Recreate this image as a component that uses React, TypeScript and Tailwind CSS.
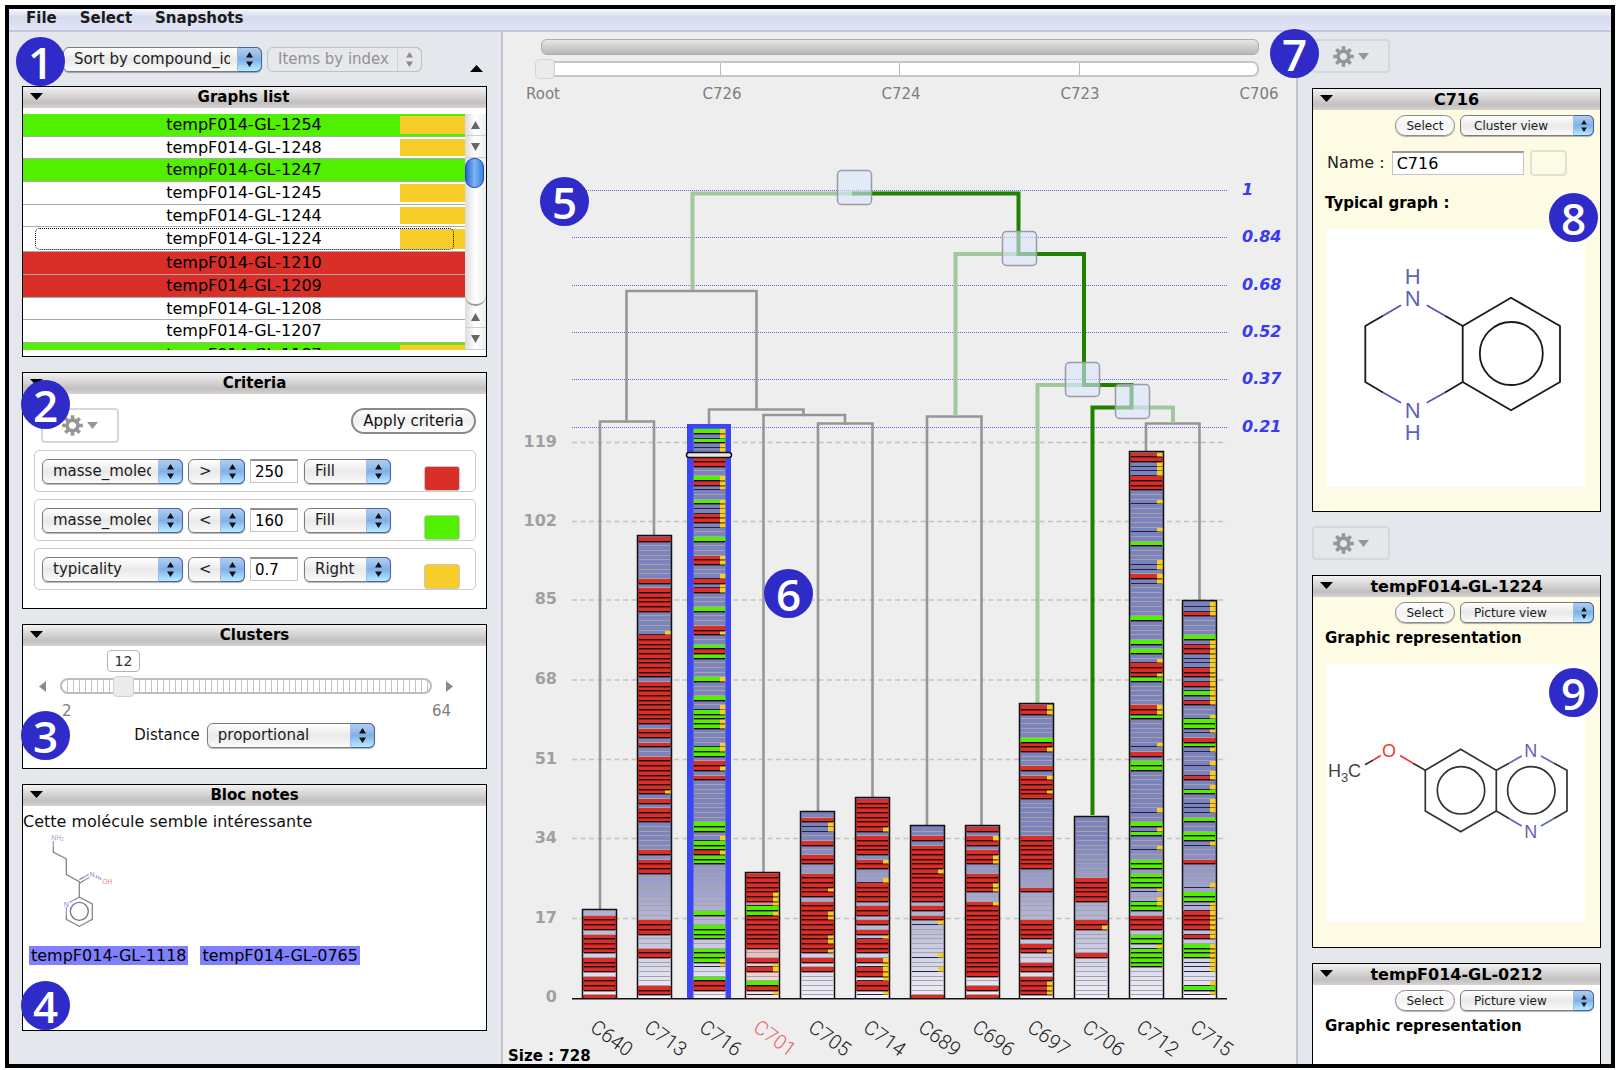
import React from "react";

const SANS = "font-['DejaVu_Sans','Noto_Sans',sans-serif]";

/* ---------- small shared controls ---------- */

function Badge({ n, className }: { n: number; className: string }) {
  return (
    <span
      className={`absolute z-20 flex size-[49px] items-center justify-center rounded-full bg-[#2f2bc9] font-['Open_Sans',sans-serif] text-[44px] leading-none font-semibold text-white ${className}`}
    >
      {n}
    </span>
  );
}

function Triangle({ up = false }: { up?: boolean }) {
  return (
    <svg className="block h-[7px] w-[13px]" viewBox="0 0 13 7" aria-hidden="true">
      <path d={up ? "M0 7L6.5 0L13 7Z" : "M0 0H13L6.5 7Z"} fill="#000" />
    </svg>
  );
}

function Popup({
  label,
  options,
  className,
  small = false,
  disabled = false,
}: {
  label: string;
  options: string[];
  className: string;
  small?: boolean;
  disabled?: boolean;
}) {
  return (
    <span className={`relative block shrink-0 ${small ? "h-[21px]" : "h-[25px]"} ${className}`}>
      <select
        aria-label={label}
        disabled={disabled}
        className={`block size-full appearance-none rounded-[6px] border pr-[31px] ${
          small ? "pl-[13px] text-[12px]" : "pl-[10px] text-[15px]"
        } ${
          disabled
            ? "border-[#bfc1c5] bg-[#e6e8ec] text-[#929292]"
            : "border-[#7c7c7c] bg-linear-to-b from-white via-[#e9e9e9] to-[#fafafa] text-[#1c1c1c] shadow-[0_1px_1px_rgba(0,0,0,0.3)]"
        }`}
      >
        {options.map((o) => (
          <option key={o}>{o}</option>
        ))}
      </select>
      <span
        className={`pointer-events-none absolute inset-y-0 right-0 flex items-center justify-center rounded-r-[6px] border ${
          small ? "w-[21px]" : "w-[25px]"
        } ${
          disabled
            ? "border-[#bfc1c5] border-l-[#cfd1d5]"
            : "border-[#4a62a8] border-l-[#9dbce4] bg-linear-to-b from-[#b4cdee] via-[#7fb0e6] to-[#b8ecff]"
        }`}
      >
        <svg className={small ? "h-[12px] w-[6px]" : "h-[15px] w-[7px]"} viewBox="0 0 7 15" aria-hidden="true">
          <path d="M3.5 0L7 5.5H0ZM0 9.5H7L3.5 15Z" fill={disabled ? "#8a8a8a" : "#111"} />
        </svg>
      </span>
    </span>
  );
}

function GearButton({ label, className = "" }: { label: string; className?: string }) {
  return (
    <button
      type="button"
      aria-label={label}
      className={`flex w-[78px] shrink-0 items-center rounded-[4px] border-2 border-[#d6d7d9] pl-[19px] ${className}`}
    >
      <svg className="size-[21px]" viewBox="-10.5 -10.5 21 21" aria-hidden="true">
        <g stroke="#969696" strokeWidth="3.6">
          <path d="M0 -10.3V-5M0 5V10.3M-10.3 0H-5M5 0H10.3M-7.2 -7.2L-4 -4M4 4L7.2 7.2M-7.2 7.2L-4 4M4 -4L7.2 -7.2" />
          <circle r="5.4" fill="none" />
        </g>
      </svg>
      <svg className="ml-[4px] h-[7px] w-[11px]" viewBox="0 0 11 7" aria-hidden="true">
        <path d="M0 0H11L5.5 7Z" fill="#969696" />
      </svg>
    </button>
  );
}

function PanelHeader({
  title,
  large = false,
  className = "",
}: {
  title: string;
  large?: boolean;
  className?: string;
}) {
  return (
    <header
      className={`relative flex h-[21px] shrink-0 items-center justify-center bg-linear-to-b from-[#f2f2f2] via-[#c3bfbf] via-75% to-[#d6d3d3] ${className}`}
    >
      <button type="button" aria-label={`Collapse ${title}`} className="absolute top-[6px] left-[7px]">
        <Triangle />
      </button>
      <h2 className={`leading-none font-bold text-black ${large ? "text-[16px]" : "text-[15px]"}`}>{title}</h2>
    </header>
  );
}

/* ---------- left column ---------- */

type Row = { name: string; fill: string; mark: boolean; focused?: boolean };

const rows: Row[] = [
  { name: "tempF014-GL-1254", fill: "bg-[#50f000]", mark: true },
  { name: "tempF014-GL-1248", fill: "bg-white", mark: true },
  { name: "tempF014-GL-1247", fill: "bg-[#50f000]", mark: false },
  { name: "tempF014-GL-1245", fill: "bg-white", mark: true },
  { name: "tempF014-GL-1244", fill: "bg-white", mark: true },
  { name: "tempF014-GL-1224", fill: "bg-white", mark: true, focused: true },
  { name: "tempF014-GL-1210", fill: "bg-[#da2e29]", mark: false },
  { name: "tempF014-GL-1209", fill: "bg-[#da2e29]", mark: false },
  { name: "tempF014-GL-1208", fill: "bg-white", mark: false },
  { name: "tempF014-GL-1207", fill: "bg-white", mark: false },
];

function ScrollArrow({ down = false }: { down?: boolean }) {
  return (
    <button
      type="button"
      aria-label={down ? "Scroll down" : "Scroll up"}
      className="flex h-[22px] w-full shrink-0 items-center justify-center border-b border-[#cfcfcf]"
    >
      <svg className="h-[8px] w-[9px]" viewBox="0 0 9 8" aria-hidden="true">
        <path d={down ? "M0 0H9L4.5 8Z" : "M0 8L4.5 0L9 8Z"} fill="#666" />
      </svg>
    </button>
  );
}

function GraphsPanel() {
  return (
    <section className="flex h-[271px] shrink-0 flex-col border border-black bg-white">
      <PanelHeader title="Graphs list" className="pr-[22px]" />
      <div className="mt-[6px] flex h-[236px] overflow-hidden">
        <ul className="min-w-0 flex-1">
          <li className="flex h-[229px] flex-col">
            {rows.map((r) => (
              <button
                key={r.name}
                type="button"
                className={`relative flex w-full items-center justify-center border-b border-[#aaa] text-[16px] leading-none text-black ${
                  r.focused ? "h-[25px] shrink-0" : "min-h-0 flex-1"
                } ${r.fill}`}
              >
                {r.mark && <span className="absolute top-[2px] right-0 bottom-[2px] w-[65px] bg-[#f6cd29]" />}
                {r.focused && (
                  <span className="absolute inset-y-[1px] right-[11px] left-[12px] rounded-[5px] border border-dotted border-black" />
                )}
                <span className="relative">{r.name}</span>
              </button>
            ))}
          </li>
          <li className="relative flex h-[23px] items-center justify-center bg-[#50f000] text-[16px] leading-none">
            <span className="absolute top-[2px] right-0 bottom-[2px] w-[65px] bg-[#f6cd29]" />
            <span className="relative">tempF014-GL-1187</span>
          </li>
        </ul>
        <div className="flex w-[21px] flex-col bg-linear-to-r from-[#dcdcdc] via-white to-[#ececec]">
          <ScrollArrow />
          <ScrollArrow down />
          <span className="h-[30px] w-[19px] shrink-0 rounded-[9px] border border-[#1b4fae] bg-linear-to-r from-[#2a66cc] via-[#7db4f5] to-[#3c7fdc]" />
          <span className="flex-1 rounded-b-[10px] border-b-2 border-[#999]" />
          <ScrollArrow />
          <ScrollArrow down />
        </div>
      </div>
    </section>
  );
}

const criteria = [
  { field: "masse_moleculaire", op: ">", value: "250", mode: "Fill", color: "bg-[#da2e29]" },
  { field: "masse_moleculaire", op: "<", value: "160", mode: "Fill", color: "bg-[#50f000]" },
  { field: "typicality", op: "<", value: "0.7", mode: "Right", color: "bg-[#f6cd29]" },
];

function CriteriaPanel() {
  return (
    <section className="relative h-[237px] shrink-0 border border-black bg-white">
      <PanelHeader title="Criteria" />
      <Badge n={2} className="top-[7px] -left-[2px]" />
      <div className="mt-[14px] flex items-start justify-between pr-[10px] pl-[18px]">
        <GearButton label="Criteria actions" className="h-[35px]" />
        <button
          type="button"
          className="h-[26px] w-[125px] rounded-full border-2 border-[#8a8a8a] bg-linear-to-b from-white via-[#f0f0f0] to-white text-[15px] leading-none text-[#111]"
        >
          Apply criteria
        </button>
      </div>
      <div className="mt-[7px] flex flex-col gap-[7px] pr-[10px] pl-[11px]">
        {criteria.map((c, i) => (
          <div key={i} className="flex h-[42px] items-center rounded-[5px] border border-[#ccc] pr-[15px] pl-[7px]">
            <Popup label={`Criterion ${i + 1} field`} options={[c.field]} className="w-[141px]" />
            <Popup label={`Criterion ${i + 1} operator`} options={[c.op]} className="ml-[5px] w-[57px]" />
            <input
              aria-label={`Criterion ${i + 1} value`}
              defaultValue={c.value}
              className="ml-[5px] h-[24px] w-[48px] border border-t-2 border-[#c4c4c4] border-t-[#8f8f8f] px-[4px] text-[15px] text-black"
            />
            <Popup label={`Criterion ${i + 1} mode`} options={[c.mode]} className="ml-[6px] w-[87px]" />
            <button
              type="button"
              aria-label={`Criterion ${i + 1} colour`}
              className={`mt-auto ml-auto h-[25px] w-[36px] rounded-[3px] border border-[#c8c8c8] ${c.color}`}
            />
          </div>
        ))}
      </div>
    </section>
  );
}

function ClustersPanel() {
  return (
    <section className="relative flex h-[145px] shrink-0 flex-col border border-black bg-white">
      <PanelHeader title="Clusters" />
      <Badge n={3} className="top-[86px] -left-[2px]" />
      <output
        htmlFor="clusters"
        className="mt-[4px] ml-[84px] flex h-[22px] w-[33px] items-center justify-center rounded-[4px] border border-[#b4b4b4] text-[14px] leading-none text-[#333]"
      >
        12
      </output>
      <div className="mt-[6px] flex items-center pr-[33px] pl-[16px]">
        <svg className="h-[11px] w-[7px]" viewBox="0 0 7 11" aria-hidden="true">
          <path d="M7 0V11L0 5.5Z" fill="#8a8a8a" />
        </svg>
        <input
          id="clusters"
          aria-label="Number of clusters"
          type="range"
          min={2}
          max={64}
          defaultValue={12}
          className="mx-[14px] h-[16px] min-w-0 flex-1 appearance-none rounded-full border-2 border-[#bdbdbd] bg-[repeating-linear-gradient(90deg,#fff_0px,#fff_5px,#c4c4c4_5px,#c4c4c4_6px)] [&::-webkit-slider-thumb]:-ml-[5px] [&::-webkit-slider-thumb]:h-[21px] [&::-webkit-slider-thumb]:w-[21px] [&::-webkit-slider-thumb]:appearance-none [&::-webkit-slider-thumb]:rounded-[4px] [&::-webkit-slider-thumb]:border [&::-webkit-slider-thumb]:border-[#d0d0d0] [&::-webkit-slider-thumb]:bg-[#ebebeb]"
        />
        <svg className="h-[11px] w-[7px]" viewBox="0 0 7 11" aria-hidden="true">
          <path d="M0 0V11L7 5.5Z" fill="#8a8a8a" />
        </svg>
      </div>
      <div className="mt-[7px] flex justify-between pr-[35px] pl-[39px] text-[15px] leading-[20px] text-[#7d7d7d]">
        <span>2</span>
        <span>64</span>
      </div>
      <label className="mt-[2px] flex items-center justify-center gap-[7px] text-[15px] text-[#111]">
        Distance
        <Popup label="Distance" options={["proportional"]} className="w-[168px]" />
      </label>
    </section>
  );
}

function NoteMolecule() {
  return (
    <svg className="ml-[27px] h-[95px] w-[64px]" viewBox="150 190 192 285" role="img" aria-label="Molecule">
      <g fill="none" stroke="#8a8a8a" strokeWidth="4">
        <path d="M160 232V247L199 268V315L238 336V382L277 403V449L238 470L199 449V432" />
        <path d="M238 382L222 391M238 330L252 322M240 340L254 331" />
        <circle cx="238" cy="425" r="27" stroke="#777788" />
      </g>
      <g fill="none" stroke="#9c9cd6" strokeWidth="4">
        <path d="M160 214V232M222 391L208 398M199 412V432M252 322L266 314M254 331L268 323" />
        <path d="M288 320L306 330" strokeWidth="8" strokeDasharray="4 3" />
      </g>
      <g fontFamily="'Liberation Sans', sans-serif" fontSize="20">
        <text x="154" y="210" fill="#9c9cd6">
          NH
          <tspan fontSize="14" dy="5">2</tspan>
        </text>
        <text x="269" y="321" fill="#8282c8">N</text>
        <text x="192" y="411" fill="#8282c8">N</text>
        <text x="307" y="343" fill="#f08080">OH</text>
      </g>
    </svg>
  );
}

function NotesPanel() {
  return (
    <section className="relative h-[247px] shrink-0 border border-black bg-white">
      <PanelHeader title="Bloc notes" />
      <Badge n={4} className="bottom-0 -left-[2px]" />
      <p className="mt-[5px] text-[16px] leading-[22px] text-[#111]">Cette molécule semble intéressante</p>
      <NoteMolecule />
      <div className="mt-[18px] ml-[6px] flex gap-[12px]">
        {["tempF014-GL-1118", "tempF014-GL-0765"].map((t) => (
          <a key={t} href={`#${t}`} className="bg-[#8080ff] px-[2px] text-[16px] leading-[19px] text-black">
            {t}
          </a>
        ))}
      </div>
    </section>
  );
}

function LeftColumn() {
  return (
    <aside className="relative flex w-[494px] shrink-0 flex-col border-r-2 border-[#c0c4ca] bg-[#e4e7ec] pr-[14px] pl-[13px]">
      <Badge n={1} className="top-[5px] left-[7px]" />
      <div className="flex h-[54px] shrink-0 items-center pl-[41px]">
        <Popup label="Sort order" options={["Sort by compound_id"]} className="w-[199px]" />
        <Popup label="Items order" options={["Items by index"]} disabled className="ml-[5px] w-[155px]" />
        <button type="button" aria-label="Collapse list" className="mt-[18px] mr-[4px] ml-auto">
          <Triangle up />
        </button>
      </div>
      <div className="flex flex-col gap-[15px]">
        <GraphsPanel />
        <CriteriaPanel />
        <ClustersPanel />
        <NotesPanel />
      </div>
    </aside>
  );
}

/* ---------- centre: dendrogram and cluster columns ---------- */

/*
 * Items run from the bottom of a column to its top.
 * R/G: filled red/green, lower case: with a yellow mark on the right,
 * y: yellow mark only, a dot: plain. A number repeats the item before it.
 */
const columns = [
  { name: "C640", x: 582, cx: 600, items: "R.R3.R3.R4.R3." },
  { name: "C713", x: 637, cx: 654, items: ".R2.6R2.3R3.10R3.R.6R3.R.rR7.2R.R2.R9.R9y.4R5.R.8R" },
  {
    name: "C716",
    x: 692,
    cx: 709,
    items:
      ".2R2G.2ygG2.2G3.2G.10G2rG2y.G2.9R.rR.Ggy.3g2Ggy.G.3g.4GRG.2rR.3G.3ryRy.2r2.3G.2yr2y2g.2yrg.2R2.y2Gyg",
  },
  { name: "C701", x: 745, cx: 763, items: ".yRG.2ryR.2R7gGyr2R4" },
  { name: "C705", x: 800, cx: 818, items: ".6R.R.rRr2R3r2R2.RrR3.2R2.2R.2y2R." },
  { name: "C714", x: 855, cx: 873, items: ".yR2yr2yr.R3yR.R.R2.R4y.2Rr.R4.rR6" },
  { name: "C689", x: 910, cx: 928, items: "R.5y.2y.6yR.R.R6rR5.R.2" },
  { name: "C696", x: 965, cx: 982, items: "R.R.2R15r.2r2R2.2r2R.Rr.R" },
  { name: "C697", x: 1019, cx: 1037, items: ".r3R.R2.2rR.R4.6R.4R7.8RrR2r.R.3rRG.5r2" },
  { name: "C706", x: 1074, cx: 1092, items: ".9R.5rR.4R5.13" },
  {
    name: "C712",
    x: 1129,
    cx: 1146,
    items: ".7G4yG2.R3.Ggy.yG3.G2.2y.2GyG.2y.8G2.R.y.5Gr2.5GrR2y.G.G.4G.7yr.y2.3G.2y.5y.2R3y3Rr",
  },
  {
    name: "C715",
    x: 1182,
    cx: 1200,
    items: ".yGy.2y3g3.ryr4y2G2.y.4R.3yG2.2G.y3.Gy.ry.y.2yGR.yG2y.2rygyryr2y3r2yG.4ry2",
  },
];

const UNIT = 4.677;
const BASE = 1000;

function expand(items: string): string[] {
  return Array.from(items.matchAll(/([.RGrgy])(\d*)/g)).flatMap((m) => Array(Number(m[2] || 1)).fill(m[1]));
}

function Column({ name, x, items }: { name: string; x: number; items: string }) {
  const list = expand(items);
  const selected = name === "C716";
  const top = Math.round(BASE - list.length * UNIT) - 2;
  return (
    <g>
      {selected && <rect x={687} y={424} width={44} height={575} fill="#3a46f8" />}
      <rect x={x} y={top} width={35} height={999 - top} fill={name === "C701" ? "url(#rose)" : "url(#slate)"} />
      {list.map((k, i) => {
        const y = Math.round(BASE - (i + 1) * UNIT);
        const h = Math.min(Math.round(BASE - i * UNIT), 998) - y;
        const color = k === "R" || k === "r" ? "#da2e29" : k === "G" || k === "g" ? "#50f000" : null;
        const mark = k === "r" || k === "g" || k === "y";
        return (
          <g key={i}>
            {color && <rect x={x + 1} y={y} width={33} height={h} fill={color} />}
            {i > 0 && (
              <rect
                x={x + 2}
                y={y + h - 1}
                width={31}
                height={color ? 1.4 : 1}
                fill={color ? "#200404" : mark ? "#20243c" : "#a3a3a8"}
              />
            )}
            {mark && <rect x={x + 28} y={y} width={6} height={h - 0.5} fill="#f6cd29" />}
          </g>
        );
      })}
      <path
        d={`M${x + 0.5} 999V${top + 0.5}H${x + 34.5}V999`}
        fill="none"
        stroke={selected ? "#3a46f8" : "#111"}
        strokeWidth={selected ? 2 : 1.5}
      />
      {selected && (
        <rect x={686.5} y={452.5} width={45} height={5} rx={2.5} fill="#e8e6dc" stroke="#111" strokeWidth="1.5" />
      )}
    </g>
  );
}

const counts = [
  [119, 442.5],
  [102, 521.5],
  [85, 600],
  [68, 680],
  [51, 759.5],
  [34, 838.5],
  [17, 918.5],
  [0, 998],
];

const levels: [string, number][] = [
  ["1", 190.5],
  ["0.84", 237.5],
  ["0.68", 285.5],
  ["0.52", 332.5],
  ["0.37", 379.5],
  ["0.21", 427.5],
];

const nodes = [
  [837.5, 170.5],
  [1002.5, 231.5],
  [1065.5, 362.5],
  [1115.5, 384.5],
];

function Chart() {
  return (
    <svg
      className="block min-h-0 w-full flex-1"
      viewBox="503 105 793 959"
      preserveAspectRatio="xMidYMin meet"
      role="img"
      aria-label="Cluster dendrogram"
    >
      <defs>
        <linearGradient id="slate" gradientUnits="userSpaceOnUse" x1="0" y1="999" x2="0" y2="835">
          <stop offset="0" stopColor="#f2f2fa" />
          <stop offset="0.45" stopColor="#b9b9d8" />
          <stop offset="1" stopColor="#7c82bb" />
        </linearGradient>
        <linearGradient id="rose" gradientUnits="userSpaceOnUse" x1="0" y1="999" x2="0" y2="860">
          <stop offset="0" stopColor="#f8e8e8" />
          <stop offset="1" stopColor="#d86060" />
        </linearGradient>
      </defs>

      <g stroke="#c2c2bc" strokeWidth="1.5" strokeDasharray="5 3.5">
        {counts.slice(0, 7).map(([n, y]) => (
          <path key={n} d={`M572 ${y}H1227`} />
        ))}
      </g>
      <g stroke="#6a60f0" strokeWidth="1" strokeDasharray="1 1">
        {levels.map(([n, y]) => (
          <path key={n} d={`M572 ${y}H1227`} />
        ))}
      </g>
      <g fontFamily="'DejaVu Sans', sans-serif" fontWeight="bold" fontSize="16">
        <g fill="#a0a0a0" textAnchor="end">
          {counts.map(([n, y]) => (
            <text key={n} x="557" y={y + 4}>
              {n}
            </text>
          ))}
        </g>
        <g fill="#3a3af0" fontStyle="italic">
          {levels.map(([n, y]) => (
            <text key={n} x="1242" y={y + 4.5}>
              {n}
            </text>
          ))}
        </g>
      </g>

      <g fill="none" strokeLinecap="square">
        <g stroke="#969696" strokeWidth="2.6">
          <path d="M626.5 421.5V291H756.5V409" />
          <path d="M600 910V421.5H654V534" />
          <path d="M709 423V409.5H803.5V415" />
          <path d="M763.5 871V415H845V423.5" />
          <path d="M818 811V423.5H872.5V797" />
          <path d="M927 825V416.5H981.5V825" />
          <path d="M1146 452V423.5H1199.5V600" />
        </g>
        <g stroke="#a2c69e" strokeWidth="4">
          <path d="M857 193.5H692.5V288" />
          <path d="M1018 254H955.5V414" />
          <path d="M1084 385H1037.5V702" />
          <path d="M1131 407.5H1173V421" />
        </g>
        <g stroke="#208000" strokeWidth="4">
          <path d="M854 193.5H1018.5V254H1084V385H1131.5V407.5H1092.5V813" />
        </g>
      </g>
      {nodes.map(([x, y]) => (
        <rect
          key={x}
          x={x}
          y={y}
          width="34"
          height="34"
          rx="4"
          fill="#d9e7fc"
          fillOpacity="0.6"
          stroke="#9a9ca4"
          strokeWidth="1.5"
        />
      ))}

      {columns.map((c) => (
        <Column key={c.name} name={c.name} x={c.x} items={c.items} />
      ))}
      <path d="M572 998.8H1227" stroke="#111" strokeWidth="1.5" />

      <g fontFamily="Roboto, sans-serif" fontSize="20" fontWeight="300">
        {columns.map((c) => (
          <text
            key={c.name}
            transform={`translate(${c.cx - 11} 1030) rotate(36)`}
            fill={c.name === "C701" ? "#e06a64" : "#222"}
          >
            {c.name}
          </text>
        ))}
      </g>
    </svg>
  );
}

function Centre() {
  return (
    <main className="relative flex min-w-0 flex-1 flex-col bg-[#eee]">
      <div className="h-[73px] shrink-0 pt-[7px] pr-[37px] pl-[38px]">
        <div className="h-[16px] rounded-[6px] border border-[#adadad] bg-linear-to-b from-[#e6e6e6] to-[#b9b7b6]" />
        <div className="relative mt-[6px] h-[16px]">
          <div className="pointer-events-none absolute inset-0 z-10 grid grid-cols-4 py-[2px]">
            <span className="border-r border-[#bbb]" />
            <span className="border-r border-[#bbb]" />
            <span className="border-r border-[#bbb]" />
          </div>
          <input
            type="range"
            aria-label="Path from root"
            min={0}
            max={4}
            defaultValue={0}
            className="block h-full w-full appearance-none rounded-[7px] border-2 border-[#c6c6c6] bg-white [&::-webkit-slider-thumb]:-ml-[8px] [&::-webkit-slider-thumb]:h-[20px] [&::-webkit-slider-thumb]:w-[20px] [&::-webkit-slider-thumb]:appearance-none [&::-webkit-slider-thumb]:rounded-[5px] [&::-webkit-slider-thumb]:border [&::-webkit-slider-thumb]:border-[#d4d4d4] [&::-webkit-slider-thumb]:bg-[#ebebeb]"
          />
        </div>
        <div className="mt-[7px] -mr-[20px] -ml-[18px] flex justify-between text-[15px] leading-[20px] text-[#7d7d7d]">
          {["Root", "C726", "C724", "C723", "C706"].map((t) => (
            <span key={t} className="w-[40px] text-center whitespace-nowrap">
              {t}
            </span>
          ))}
        </div>
      </div>
      <Chart />
      <p className="absolute bottom-0 left-[5px] text-[15px] leading-none font-bold text-black">Size : 728</p>
      <Badge n={5} className="top-[145px] left-[37px]" />
      <Badge n={6} className="top-[537px] left-[261px]" />
      <Badge n={7} className="-top-[3px] -right-[23px]" />
    </main>
  );
}

/* ---------- right column ---------- */

function DetailControls({ view }: { view: string }) {
  return (
    <div className="flex justify-end gap-[5px] pt-[5px] pr-[6px]">
      <button
        type="button"
        className="h-[21px] w-[60px] rounded-full border border-[#8a8a8a] bg-linear-to-b from-white via-[#f2f2f2] to-white text-[12px] leading-none text-[#1c1c1c] shadow-[0_1px_1px_rgba(0,0,0,0.3)]"
      >
        Select
      </button>
      <Popup small label="View" options={[view]} className="w-[134px]" />
    </div>
  );
}

function Quinoxaline() {
  return (
    <svg className="h-[258px] w-full bg-white" viewBox="0 0 258 258" role="img" aria-label="Typical graph">
      <g fill="none" stroke="#1a1a1a" strokeWidth="1.8">
        <path d="M56 86.7L38.3 97V153L56 163.5" />
        <path d="M118 86.7L135.7 97V153L118 163.5" />
        <path d="M135.7 97L184 68.7L233 97V153L184 181.3L135.7 153" />
        <circle cx="184.3" cy="124.5" r="31.5" />
      </g>
      <path
        d="M74 76.3L56 86.7M99.7 76.3L118 86.7M74 173.7L56 163.5M99.7 173.7L118 163.5"
        stroke="#5656b8"
        strokeWidth="1.8"
      />
      <g fontFamily="'Liberation Sans', sans-serif" fontSize="22" fill="#6262b8" textAnchor="middle">
        <text x="85.7" y="55">H</text>
        <text x="85.7" y="77">N</text>
        <text x="85.7" y="189">N</text>
        <text x="85.7" y="211">H</text>
      </g>
    </svg>
  );
}

function Methoxyquinoxaline() {
  return (
    <svg className="h-[258px] w-full bg-white" viewBox="0 0 258 258" role="img" aria-label="Graphic representation">
      <g fill="none" stroke="#333" strokeWidth="1.7">
        <path d="M38 100.7L46 96.2M86 99.2L98.3 106.3" />
        <path d="M98.3 106.3L133.7 85.3L169.3 106.3V147.1L133.7 167.8L98.3 147.1Z" />
        <path d="M169.3 106.3L182 99.2M169.3 147.1L182 154.5M227 99.2L240 106.3V147.1L227 154.5" />
        <circle cx="134" cy="126.3" r="23.7" />
        <circle cx="204.3" cy="126.3" r="23.7" />
      </g>
      <g strokeWidth="1.7">
        <path d="M46 96.2L53.7 91.6M73 91.6L86 99.2" stroke="#f03c32" />
        <path d="M182 99.2L194.7 92M214 92L227 99.2M182 154.5L194.7 161.9M214 161.9L227 154.5" stroke="#6262c0" />
      </g>
      <g fontFamily="'Liberation Sans', sans-serif" fontSize="18" fill="#444">
        <text x="1" y="112.5">H</text>
        <text x="14" y="118" fontSize="13">3</text>
        <text x="21" y="112.5">C</text>
        <text x="62" y="92.5" fill="#f03c32" textAnchor="middle">O</text>
        <text x="203.7" y="92.5" fill="#6262b8" textAnchor="middle">N</text>
        <text x="203.7" y="174" fill="#6262b8" textAnchor="middle">N</text>
      </g>
    </svg>
  );
}

function RightColumn() {
  return (
    <aside className="flex w-[315px] shrink-0 flex-col overflow-hidden border-l-2 border-[#c0c4c8] bg-[#e4e7ec] pr-[10px] pl-[14px]">
      <GearButton label="Cluster actions" className="mt-[7px] h-[34px]" />

      <section className="relative mt-[15px] h-[424px] shrink-0 border border-black bg-[#fdfbe3]">
        <PanelHeader large title="C716" />
        <Badge n={8} className="top-[104px] right-[2px]" />
        <DetailControls view="Cluster view" />
        <label className="mt-[14px] ml-[14px] flex h-[26px] items-center text-[16px] text-[#222]">
          Name :
          <input
            defaultValue="C716"
            className="ml-[7px] h-[24px] w-[132px] border border-t-2 border-[#c4c4c4] border-t-[#9a9a9a] bg-white px-[4px] text-[16px] text-black"
          />
          <span className="ml-[6px] h-[26px] w-[37px] rounded-[4px] border-2 border-[#e2e0d2]" />
        </label>
        <h3 className="mt-[17px] ml-[12px] text-[15px] leading-[20px] font-bold text-black">Typical graph :</h3>
        <div className="mt-[16px] pr-[15px] pl-[14px]">
          <Quinoxaline />
        </div>
      </section>

      <GearButton label="Graph actions" className="mt-[14px] h-[34px]" />

      <section className="relative mt-[15px] h-[373px] shrink-0 border border-black bg-[#fdfbe3]">
        <PanelHeader large title="tempF014-GL-1224" />
        <Badge n={9} className="top-[92px] right-[2px]" />
        <DetailControls view="Picture view" />
        <h3 className="mt-[5px] ml-[12px] text-[15px] leading-[20px] font-bold text-black">Graphic representation</h3>
        <div className="mt-[16px] pr-[15px] pl-[14px]">
          <Methoxyquinoxaline />
        </div>
      </section>

      <section className="mt-[15px] h-[373px] shrink-0 border border-black bg-white">
        <PanelHeader large title="tempF014-GL-0212" />
        <DetailControls view="Picture view" />
        <h3 className="mt-[5px] ml-[12px] text-[15px] leading-[20px] font-bold text-black">Graphic representation</h3>
      </section>
    </aside>
  );
}

export default function App() {
  return (
    <div className={`h-screen bg-white pt-[5px] pr-[3px] pb-[2px] pl-[5px] ${SANS}`}>
      <div className="flex h-full flex-col overflow-hidden border-4 border-black">
        <nav className="flex h-[23px] shrink-0 items-center gap-[23px] border-b-2 border-[#c3c7dc] bg-linear-to-b from-[#f6f7fc] via-[#d5dbee] via-40% to-[#e1e5f7] pl-[17px] text-[15px] leading-none font-bold text-[#1a1a1a]">
          {["File", "Select", "Snapshots"].map((m) => (
            <button key={m} type="button" className="pb-[3px]">
              {m}
            </button>
          ))}
        </nav>
        <div className="flex min-h-0 flex-1">
          <LeftColumn />
          <Centre />
          <RightColumn />
        </div>
      </div>
    </div>
  );
}
